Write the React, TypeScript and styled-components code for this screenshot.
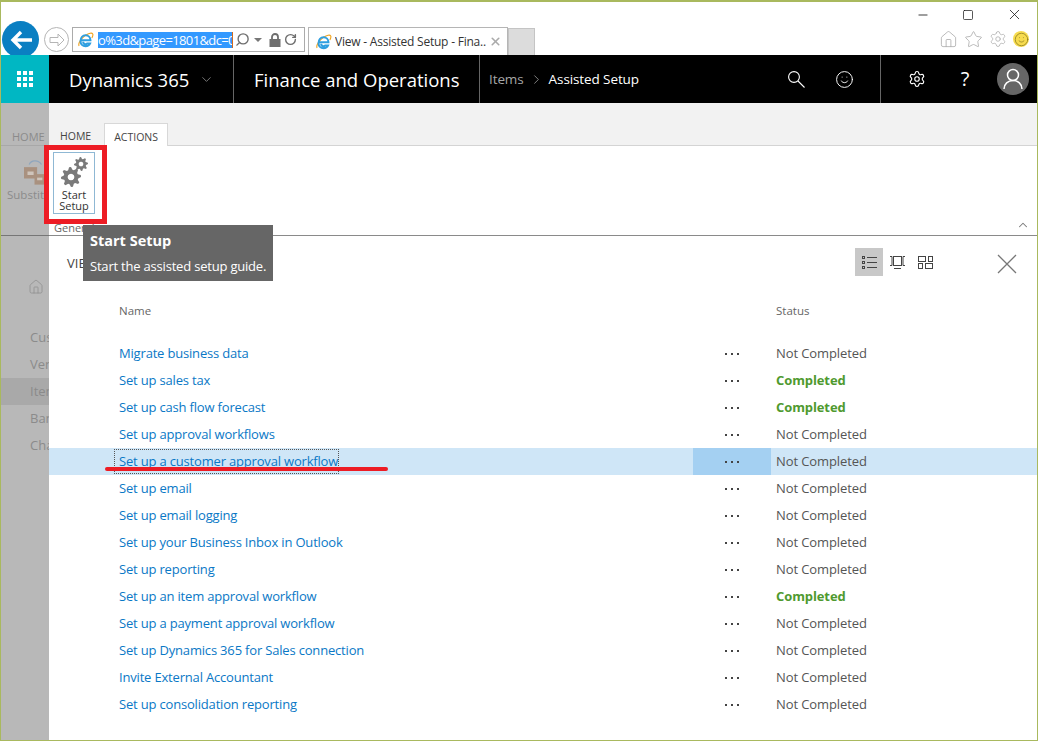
import React from "react";
import styled, { createGlobalStyle } from "styled-components";
import {
  ChevronDown,
  ChevronRight,
  ChevronUp,
  House,
  Minus,
  RotateCw,
  Search,
  Settings,
  Smile,
  Square,
  Star,
  X,
} from "lucide-react";

const FONT = `"Open Sans", "Noto Sans", "Liberation Sans", sans-serif`;

const GlobalStyle = createGlobalStyle`
  html, body {
    margin: 0;
    padding: 0;
    background: #fff;
    overflow: hidden;
  }
  * {
    box-sizing: border-box;
  }
`;

const Window = styled.div`
  position: relative;
  width: 1038px;
  height: 741px;
  overflow: hidden;
  display: flex;
  flex-direction: column;
  border: solid #a9b95e;
  border-width: 2px 1px 1px 1px;
  font-family: ${FONT};
  background: #fff;
`;

/* browser chrome */
const Chrome = styled.div`
  height: 53px;
  display: flex;
  flex-direction: column;
  flex: none;
`;

const WindowControls = styled.div`
  height: 25px;
  display: flex;
  justify-content: flex-end;
  align-items: center;
  gap: 32px;
  padding: 0 14px 0 0;
  color: #111;
`;

const ToolRow = styled.div`
  height: 28px;
  display: flex;
  align-items: flex-start;
  padding-left: 1px;
`;

const BackButton = styled.div`
  width: 37px;
  height: 37px;
  margin-top: -6px;
  border-radius: 50%;
  background: #0a7fc2;
  display: flex;
  align-items: center;
  justify-content: center;
  flex: none;
`;

const ForwardButton = styled.div`
  width: 25px;
  height: 25px;
  margin: 0 0 0 5px;
  border-radius: 50%;
  border: 1px solid #b5b5b5;
  display: flex;
  align-items: center;
  justify-content: center;
  flex: none;
`;

const AddressBar = styled.div`
  width: 233px;
  height: 25px;
  margin-left: 3px;
  padding-left: 4px;
  border: 1px solid #ababab;
  display: flex;
  align-items: center;
  flex: none;
  color: #6e6e6e;
`;

const AddressSelection = styled.span`
  width: 135px;
  height: 16px;
  margin: 0 2px 0 4px;
  background: #3399ff;
  border-right: 1px solid #d2691e;
  color: #fff;
  font-size: 13px;
  letter-spacing: -0.62px;
  line-height: 16px;
  white-space: nowrap;
  overflow: hidden;
  flex: none;
`;

const AddressTools = styled.div`
  display: flex;
  align-items: center;
  gap: 3px;
`;

const FlippedSearch = styled(Search)`
  transform: scaleX(-1);
`;

const Caret = styled.span`
  width: 0;
  height: 0;
  margin: 0 4px 0 1px;
  border: 4px solid transparent;
  border-top: 4px solid #777;
  border-bottom: 0;
`;

const BrowserTab = styled.div`
  width: 200px;
  height: 28px;
  margin-left: 3px;
  padding: 0 5px 0 6px;
  border: 1px solid #b5b5b5;
  border-bottom: 0;
  display: flex;
  align-items: center;
  gap: 3px;
  flex: none;
  font-size: 12px;
  letter-spacing: -0.22px;
  color: #333;
  white-space: nowrap;
`;

const TabTitle = styled.span`
  flex: 1;
  overflow: hidden;
`;

const NewTab = styled.div`
  width: 27px;
  height: 27px;
  margin-top: 1px;
  background: #dcdcdc;
  border: 1px solid #c4c4c4;
  border-bottom: 0;
  flex: none;
`;

const BrowserTools = styled.div`
  margin-left: auto;
  height: 24px;
  display: flex;
  align-items: center;
  gap: 6px;
  padding-right: 8px;
  color: #a9a9a9;
`;

const Smiley = styled.span`
  width: 16px;
  height: 16px;
  border-radius: 50%;
  background: #f7dc4f;
  display: flex;
  align-items: center;
  justify-content: center;
  color: #8a7a20;
`;

/* dynamics nav bar */
const AppBar = styled.header`
  height: 48px;
  flex: none;
  background: #000;
  display: flex;
  align-items: stretch;
  color: #fff;
`;

const Waffle = styled.div`
  width: 48px;
  background: #00b7c3;
  display: grid;
  place-items: center;
  flex: none;
`;

const BarSection = styled.div<{ $width: number; $pad: number }>`
  width: ${(p) => p.$width}px;
  padding-left: ${(p) => p.$pad}px;
  display: flex;
  align-items: center;
  border-right: 1px solid #666;
  flex: none;
`;

const BrandName = styled.span`
  font-size: 18.5px;
  white-space: nowrap;
`;

const BrandCaret = styled(ChevronDown)`
  margin-left: 10px;
  flex: none;
`;

const Crumb = styled.span<{ $dim?: boolean }>`
  font-size: 13.5px;
  letter-spacing: -0.1px;
  color: ${(p) => (p.$dim ? "#a6a6a6" : "#fff")};
  white-space: nowrap;
`;

const CrumbArrow = styled(ChevronRight)`
  margin: 0 5px 0 5px;
  flex: none;
`;

const BarIconGroup = styled.div`
  margin-left: auto;
  padding-right: 12px;
  display: flex;
`;

const BarIcon = styled.div`
  width: 48px;
  height: 48px;
  display: grid;
  place-items: center;
  flex: none;
`;

const BarEnd = styled.div`
  margin-left: 12px;
  display: flex;
`;

const Avatar = styled.div`
  width: 32px;
  height: 32px;
  border-radius: 50%;
  background: #666;
  display: grid;
  place-items: center;
`;

const BarQuestion = styled.span`
  font-size: 20px;
  line-height: 1;
`;

/* page below the bar */
const Body = styled.div`
  flex: 1;
  min-height: 0;
  display: flex;
`;

const Rail = styled.nav`
  width: 48px;
  flex: none;
  overflow: hidden;
  background: #b8b8b8;
  color: #8b8b8b;
  font-size: 13px;
  white-space: nowrap;
`;

const RailTabs = styled.div`
  height: 43px;
  padding: 26px 0 0 11px;
  font-size: 11px;
  line-height: 16px;
  border-bottom: 1px solid #a8a8a8;
`;

const RailRibbon = styled.div`
  height: 90px;
  padding: 12px 0 0 6px;
  border-bottom: 1px solid #767676;
  font-size: 11.5px;
  line-height: 14px;
`;

const RailRibbonIcon = styled.svg`
  display: block;
  margin: 0 0 3px 17px;
`;

const RailHome = styled.div`
  padding: 43px 0 0 27px;
  height: 88px;
  color: #8f8f8f;
`;

const RailItem = styled.div<{ $active?: boolean }>`
  height: 27px;
  line-height: 27px;
  padding-left: 29px;
  background: ${(p) => (p.$active ? "#a9a9a9" : "transparent")};
`;

const Panel = styled.main`
  flex: 1;
  min-width: 0;
  display: flex;
  flex-direction: column;
`;

const TabStrip = styled.div`
  height: 43px;
  flex: none;
  padding: 20px 0 0 11px;
  background: #f2f2f2;
  border-bottom: 1px solid #d4d4d4;
  display: flex;
  align-items: stretch;
`;

const RibbonTab = styled.div<{ $active?: boolean }>`
  height: ${(p) => (p.$active ? "23px" : "22px")};
  padding: 0 ${(p) => (p.$active ? "9px" : "0")};
  margin-left: ${(p) => (p.$active ? "13px" : "0")};
  border: solid ${(p) => (p.$active ? "#d8d8d8" : "transparent")};
  border-width: ${(p) => (p.$active ? "1px 1px 0 1px" : "0")};
  background: ${(p) => (p.$active ? "#fff" : "transparent")};
  font-size: 10.5px;
  line-height: 26px;
  color: #444;
`;

const Ribbon = styled.div`
  position: relative;
  height: 90px;
  flex: none;
  padding: 6px 0 0 4px;
  border-bottom: 1px solid #8a8a8a;
`;

const RibbonButton = styled.div`
  width: 42px;
  height: 62px;
  border: 1px solid #8fb8d4;
  padding-top: 3px;
  display: flex;
  flex-direction: column;
  align-items: center;
  font-size: 11px;
  line-height: 11px;
  text-align: center;
  color: #333;
`;

const GroupLabel = styled.div`
  margin: 8px 0 0 1px;
  font-size: 11px;
  line-height: 12px;
  color: #666;
`;

const CollapseButton = styled.div`
  position: absolute;
  right: 7px;
  bottom: 3px;
  color: #777;
  display: flex;
`;

const Content = styled.section`
  flex: 1;
  min-height: 0;
  display: flex;
  flex-direction: column;
`;

const ViewBar = styled.div`
  height: 56px;
  flex: none;
  display: flex;
  align-items: flex-start;
  padding: 12px 20px 0 18px;
  color: #444;
`;

const ViewLabel = styled.span`
  font-size: 13px;
  line-height: 30px;
  margin-right: auto;
`;

const ViewToggle = styled.div<{ $on?: boolean }>`
  width: 28px;
  height: 28px;
  display: grid;
  place-items: center;
  background: ${(p) => (p.$on ? "#c8c8c8" : "transparent")};
`;

const CloseBox = styled.div`
  margin: 6px 0 0 58px;
  display: flex;
`;

const Grid = styled.div`
  display: grid;
  grid-template-columns: 644px 78px 1fr;
`;

const HeadCell = styled.div<{ $status?: boolean }>`
  height: 48px;
  padding: 11px 0 0 ${(p) => (p.$status ? "5px" : "70px")};
  font-size: 11.5px;
  line-height: 16px;
  color: #666;
`;

const Row = styled.div<{ $selected?: boolean }>`
  display: contents;
  & > div {
    background: ${(p) => (p.$selected ? "#cfe6f7" : "transparent")};
  }
`;

const NameCell = styled.div`
  height: 27px;
  padding-left: 66px;
  display: flex;
  align-items: center;
`;

const RowLink = styled.a<{ $focused?: boolean }>`
  padding-left: 4px;
  font-size: 13px;
  line-height: 23px;
  color: #0a78c6;
  white-space: nowrap;
  letter-spacing: -0.18px;
  outline: ${(p) => (p.$focused ? "1px dotted #555" : "none")};
`;

const DotsCell = styled.div<{ $selected?: boolean }>`
  height: 27px;
  display: flex;
  align-items: center;
  justify-content: center;
  gap: 4px;
  && {
    background: ${(p) => (p.$selected ? "#a4d0f2" : "transparent")};
  }
`;

const Dot = styled.i`
  width: 2px;
  height: 2px;
  background: #444;
`;

const StatusCell = styled.div<{ $done?: boolean }>`
  height: 27px;
  padding-left: 5px;
  font-size: 13px;
  line-height: 27px;
  letter-spacing: -0.1px;
  font-weight: ${(p) => (p.$done ? 700 : 400)};
  color: ${(p) => (p.$done ? "#4f9a2f" : "#555")};
`;

/* things lying over the page */
const Callout = styled.div`
  position: absolute;
  left: 43px;
  top: 143px;
  width: 63px;
  height: 79px;
  border: 5px solid #ed1c24;
`;

const Tip = styled.div`
  position: absolute;
  left: 82px;
  top: 223px;
  width: 190px;
  height: 56px;
  padding: 4px 7px;
  background: #666;
  color: #fff;
  font-size: 13px;
  letter-spacing: -0.2px;
  line-height: 25px;
  white-space: nowrap;
`;

const TipTitle = styled.div`
  margin-bottom: 2px;
  font-size: 14.5px;
  letter-spacing: 0;
  line-height: 23px;
  font-weight: 700;
`;

const RedLine = styled.div`
  position: absolute;
  left: 104px;
  top: 465px;
  width: 283px;
  height: 4px;
  border-radius: 2px;
  background: #ed1c24;
`;

const IeMark = styled.svg`
  flex: none;
`;

const cogPath = () => {
  const teeth = 8;
  const pts: string[] = [];
  for (let i = 0; i < teeth * 4; i++) {
    const a = (i / (teeth * 4)) * Math.PI * 2 - Math.PI / 16;
    const r = i % 4 < 2 ? 12 : 8.8;
    pts.push(`${(12 + r * Math.cos(a)).toFixed(2)},${(12 + r * Math.sin(a)).toFixed(2)}`);
  }
  return `M${pts.join("L")}Z M12 8a4 4 0 1 0 .01 0Z`;
};

const GearPair = () => (
  <svg width="36" height="33" viewBox="0 0 36 33">
    <svg x="5" y="11" width="20" height="20" viewBox="0 0 24 24">
      <path fillRule="evenodd" fill="#7a7a7a" d={cogPath()} />
    </svg>
    <svg x="18" y="1" width="14" height="14" viewBox="0 0 24 24">
      <path fillRule="evenodd" fill="#7a7a7a" d={cogPath()} />
    </svg>
  </svg>
);

const IeLogo = () => (
  <IeMark width="17" height="17" viewBox="0 0 24 24" fill="none">
    <path
      d="M3 21c-2-3 3-11 9-15 5-3 9-4 10-2 1 1 0 4-1 6"
      stroke="#f0a21c"
      strokeWidth="1.6"
    />
    <path
      d="M5.500 13h13.500c0-4-3-7-7-7s-7 3.500-7 8 3 7.500 7 7.500c3 0 5.500-1.500 6.500-4h-4c-.6.8-1.500 1.200-2.500 1.200-2 0-3.300-1.500-3.300-3.500"
      stroke="#2f9fe0"
      strokeWidth="2.8"
    />
  </IeMark>
);

const WaffleIcon = () => (
  <svg width="16" height="16" viewBox="0 0 16 16" fill="#fff">
    {[0, 6, 12].flatMap((y) =>
      [0, 6, 12].map((x) => <rect key={`${x}-${y}`} x={x} y={y} width="4" height="4" />),
    )}
  </svg>
);

const PadlockIcon = () => (
  <svg width="12" height="14" viewBox="0 0 12 14">
    <path d="M3 6.500V4a3 3 0 0 1 6 0v2.500" fill="none" stroke="#6e6e6e" strokeWidth="1.8" />
    <rect x="0.5" y="6" width="11" height="8" fill="#6e6e6e" />
  </svg>
);

const BarSearchIcon = () => (
  <svg width="17" height="17" viewBox="0 0 17 17" fill="none" stroke="#fff" strokeWidth="1.1">
    <circle cx="6" cy="6" r="5.400" />
    <path d="M10 10l6.500 6.500" />
  </svg>
);

const PersonIcon = () => (
  <svg width="20" height="22" viewBox="0 0 20 22" fill="none" stroke="#fff" strokeWidth="1.5">
    <circle cx="10" cy="7" r="5.500" />
    <path d="M1 21c0-5 4-8.500 9-8.500s9 3.500 9 8.500" />
  </svg>
);

const SubstituteIcon = () => (
  <RailRibbonIcon width="21" height="27" viewBox="0 0 24 30">
    <path d="M6 7c2-5 10-6 14 0" fill="none" stroke="#8fa6bd" strokeWidth="1.500" />
    <rect x="0" y="10" width="15" height="13" fill="#a9917f" />
    <rect x="4" y="15" width="7" height="4" fill="#cfc5bc" />
    <rect x="12" y="18" width="12" height="12" fill="#a9917f" />
    <rect x="15" y="22" width="6" height="3" fill="#cfc5bc" />
  </RailRibbonIcon>
);

const ListIcon = () => (
  <svg width="15" height="13" viewBox="0 0 15 13" fill="none" stroke="#444">
    <rect x="0.5" y="0.5" width="2" height="2" />
    <rect x="0.5" y="5.500" width="2" height="2" />
    <rect x="0.5" y="10.500" width="2" height="2" />
    <path d="M5 1.500h10M5 6.500h10M5 11.500h10" />
  </svg>
);

const FilmIcon = () => (
  <svg width="15" height="13" viewBox="0 0 15 13" fill="none" stroke="#444">
    <rect x="3.500" y="0.5" width="8" height="9" />
    <path d="M0 .5h2v9H0M15 .5h-2v9h2M4 12.500h7" />
  </svg>
);

const TilesIcon = () => (
  <svg width="15" height="13" viewBox="0 0 15 13" fill="none" stroke="#444">
    <rect x="0.5" y="0.5" width="7" height="5" />
    <rect x="10.500" y="0.5" width="4" height="5" />
    <rect x="0.5" y="7.500" width="4" height="5" />
    <rect x="7.500" y="7.500" width="7" height="5" />
  </svg>
);

const CloseIcon = () => (
  <svg width="20" height="20" viewBox="0 0 20 20" fill="none" stroke="#777" strokeWidth="1.3">
    <path d="M1 1l18 18M19 1L1 19" />
  </svg>
);

type SetupRow = { name: string; done?: boolean; selected?: boolean };

const rows: SetupRow[] = [
  { name: "Migrate business data" },
  { name: "Set up sales tax", done: true },
  { name: "Set up cash flow forecast", done: true },
  { name: "Set up approval workflows" },
  { name: "Set up a customer approval workflow", selected: true },
  { name: "Set up email" },
  { name: "Set up email logging" },
  { name: "Set up your Business Inbox in Outlook" },
  { name: "Set up reporting" },
  { name: "Set up an item approval workflow", done: true },
  { name: "Set up a payment approval workflow" },
  { name: "Set up Dynamics 365 for Sales connection" },
  { name: "Invite External Accountant" },
  { name: "Set up consolidation reporting" },
];

const App = () => {
  return (
    <Window>
      <GlobalStyle />
      <Chrome>
        <WindowControls>
          <Minus size={14} strokeWidth={1.4} />
          <Square size={12} strokeWidth={1.4} />
          <X size={17} strokeWidth={1.1} />
        </WindowControls>
        <ToolRow>
          <BackButton>
            <svg width="22" height="20" viewBox="0 0 22 20" fill="none" stroke="#fff" strokeWidth="3.4">
              <path d="M11 2 3 10l8 8M3 10h19" />
            </svg>
          </BackButton>
          <ForwardButton>
            <svg width="16" height="14" viewBox="0 0 16 14" fill="none" stroke="#b5b5b5">
              <path d="M9 1l6 6-6 6v-3.500H1v-5h8z" />
            </svg>
          </ForwardButton>
          <AddressBar>
            <IeLogo />
            <AddressSelection>o%3d&amp;page=1801&amp;dc=0</AddressSelection>
            <AddressTools>
              <FlippedSearch size={15} strokeWidth={2.2} />
              <Caret />
              <PadlockIcon />
              <RotateCw size={13} strokeWidth={2.6} />
            </AddressTools>
          </AddressBar>
          <BrowserTab>
            <IeLogo />
            <TabTitle>View - Assisted Setup - Fina...</TabTitle>
            <X size={13} strokeWidth={3} color="#aaa" />
          </BrowserTab>
          <NewTab />
          <BrowserTools>
            <House size={19} strokeWidth={1} />
            <Star size={19} strokeWidth={1} />
            <Settings size={18} strokeWidth={1} />
            <Smiley>
              <Smile size={15} strokeWidth={1.2} />
            </Smiley>
          </BrowserTools>
        </ToolRow>
      </Chrome>

      <AppBar>
        <Waffle>
          <WaffleIcon />
        </Waffle>
        <BarSection $width={185} $pad={20}>
          <BrandName>Dynamics 365</BrandName>
          <BrandCaret size={15} strokeWidth={1} color="#bbb" />
        </BarSection>
        <BarSection $width={246} $pad={20}>
          <BrandName>Finance and Operations</BrandName>
        </BarSection>
        <BarSection $width={401} $pad={9}>
          <Crumb $dim>Items</Crumb>
          <CrumbArrow size={15} strokeWidth={1} color="#ccc" />
          <Crumb>Assisted Setup</Crumb>
          <BarIconGroup>
            <BarIcon>
              <BarSearchIcon />
            </BarIcon>
            <BarIcon>
              <Smile size={19} strokeWidth={1.2} />
            </BarIcon>
          </BarIconGroup>
        </BarSection>
        <BarEnd>
          <BarIcon>
            <Settings size={18} strokeWidth={1.5} />
          </BarIcon>
          <BarIcon>
            <BarQuestion>?</BarQuestion>
          </BarIcon>
          <BarIcon>
            <Avatar>
              <PersonIcon />
            </Avatar>
          </BarIcon>
        </BarEnd>
      </AppBar>

      <Body>
        <Rail>
          <RailTabs>HOME</RailTabs>
          <RailRibbon>
            <SubstituteIcon />
            Substitutes
          </RailRibbon>
          <RailHome>
            <House size={16} strokeWidth={1.2} />
          </RailHome>
          <RailItem>Customers</RailItem>
          <RailItem>Vendors</RailItem>
          <RailItem $active>Items</RailItem>
          <RailItem>Bank</RailItem>
          <RailItem>Charges</RailItem>
        </Rail>
        <Panel>
          <TabStrip>
            <RibbonTab>HOME</RibbonTab>
            <RibbonTab $active>ACTIONS</RibbonTab>
          </TabStrip>
          <Ribbon>
            <RibbonButton>
              <GearPair />
              Start Setup
            </RibbonButton>
            <GroupLabel>General</GroupLabel>
            <CollapseButton>
              <ChevronUp size={14} strokeWidth={1.8} />
            </CollapseButton>
          </Ribbon>
          <Content>
            <ViewBar>
              <ViewLabel>VIEW</ViewLabel>
              <ViewToggle $on>
                <ListIcon />
              </ViewToggle>
              <ViewToggle>
                <FilmIcon />
              </ViewToggle>
              <ViewToggle>
                <TilesIcon />
              </ViewToggle>
              <CloseBox>
                <CloseIcon />
              </CloseBox>
            </ViewBar>
            <Grid>
              <HeadCell>Name</HeadCell>
              <HeadCell />
              <HeadCell $status>Status</HeadCell>
              {rows.map((row) => (
                <Row key={row.name} $selected={row.selected}>
                  <NameCell>
                    <RowLink $focused={row.selected}>{row.name}</RowLink>
                  </NameCell>
                  <DotsCell $selected={row.selected}>
                    <Dot />
                    <Dot />
                    <Dot />
                  </DotsCell>
                  <StatusCell $done={row.done}>{row.done ? "Completed" : "Not Completed"}</StatusCell>
                </Row>
              ))}
            </Grid>
          </Content>
        </Panel>
      </Body>

      <Callout />
      <Tip>
        <TipTitle>Start Setup</TipTitle>
        Start the assisted setup guide.
      </Tip>
      <RedLine />
    </Window>
  );
};

export default App;
